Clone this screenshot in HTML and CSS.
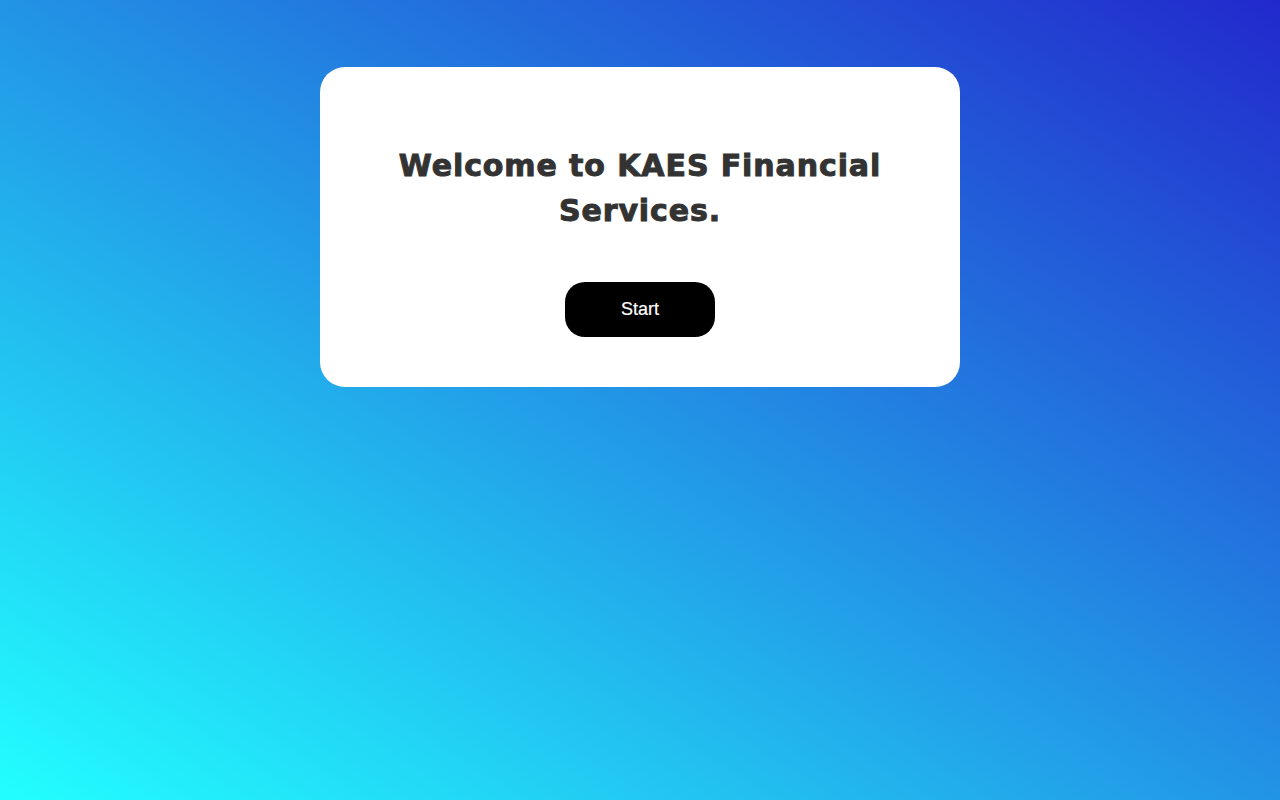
FILE: index.html
```html
<!DOCTYPE html>
<html lang="en">
<head>
<meta charset="utf-8">
<title>KAES Financial Services</title>
<link rel="stylesheet" href="styles.css">
</head>
<body>
<main class="page">
  <section class="card">
    <h1 class="title">Welcome to KAES Financial Services.</h1>
    <button class="start">Start</button>
  </section>
</main>
</body>
</html>
```

FILE: styles.css
```css
html, body {
  margin: 0;
  padding: 0;
  height: 100%;
}
body {
  background: linear-gradient(to top right, #22ffff 0%, #2229cc 100%);
  font-family: "Liberation Sans", Arial, sans-serif;
}
.page {
  display: flex;
  justify-content: center;
  padding-top: 67px;
}
.card {
  width: 640px;
  box-sizing: border-box;
  background: #fff;
  border-radius: 25px;
  padding: 76px 60px 50px;
  display: flex;
  flex-direction: column;
  align-items: center;
}
.title {
  margin: 0 0 49px;
  font-family: "DejaVu Sans", sans-serif;
  font-weight: bold;
  font-size: 30px;
  line-height: 45px;
  color: #333;
  text-align: center;
  letter-spacing: 0.9px;
  -webkit-text-stroke: 1px #333;
}
.start {
  width: 150px;
  height: 55px;
  border: none;
  border-radius: 20px;
  background: #000;
  color: #fff;
  font-family: "Liberation Sans", Arial, sans-serif;
  font-size: 18px;
  -webkit-text-stroke: 0.2px #fff;
  cursor: pointer;
}
```
